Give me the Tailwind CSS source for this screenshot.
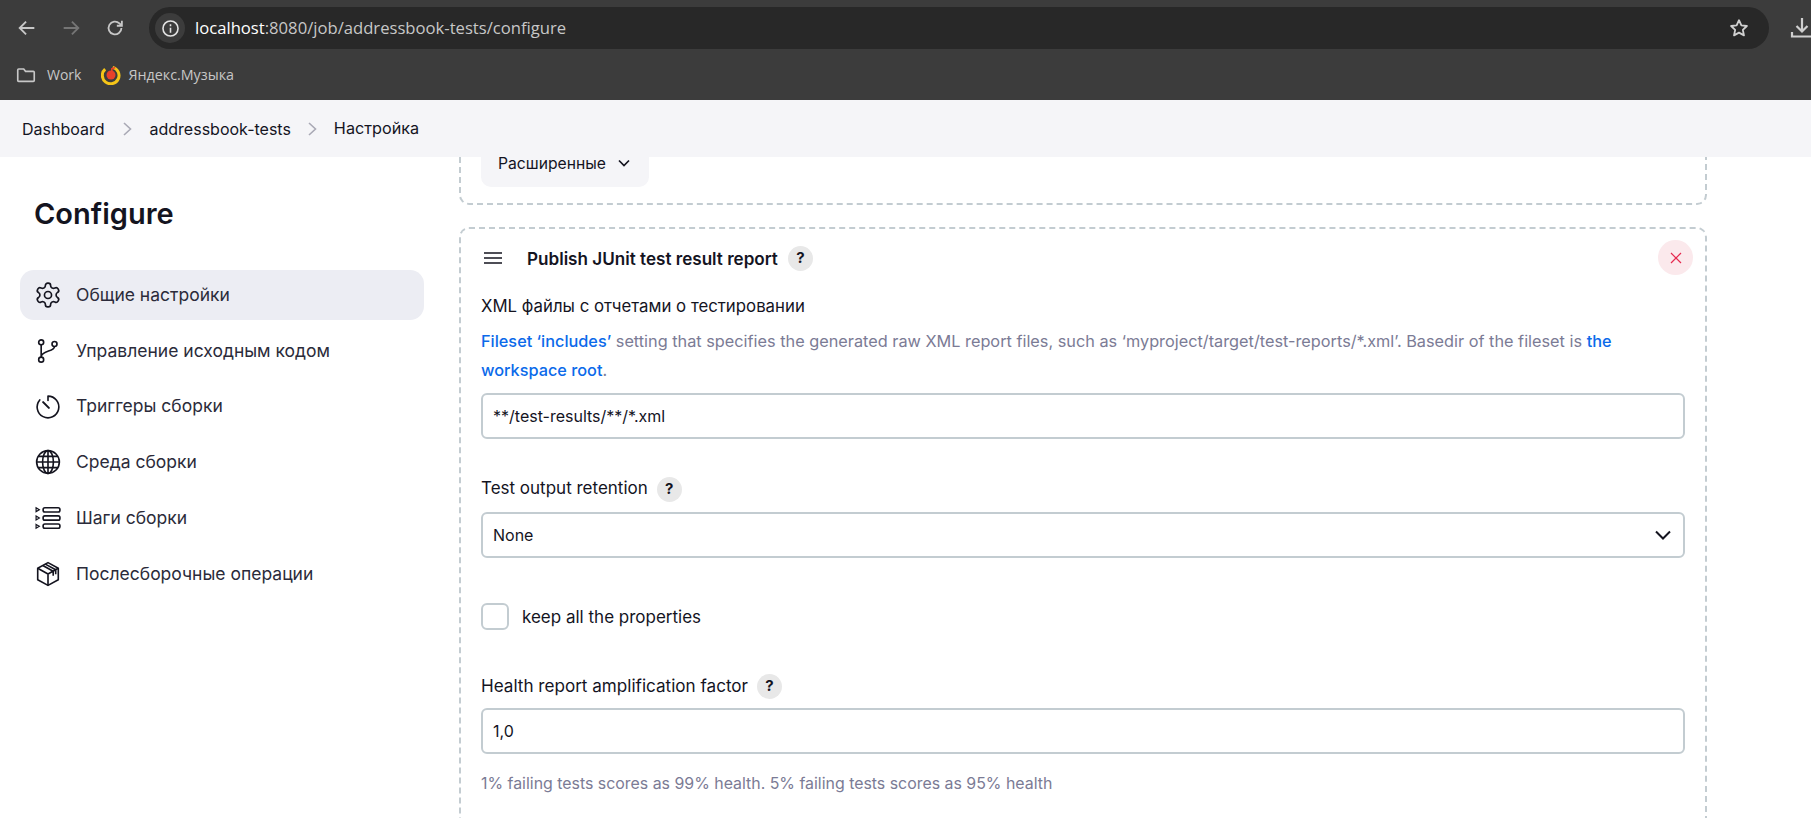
<!DOCTYPE html>
<html lang="ru">
<head>
  <meta charset="UTF-8">
  <title>addressbook-tests Config</title>
  <script src="https://cdn.jsdelivr.net/npm/@tailwindcss/browser@4"></script>
</head>
<body class="h-screen overflow-hidden bg-white text-[#14141f] font-['Inter',sans-serif] text-[16px] flex flex-col">
  <!-- Browser chrome -->
  <header class="relative z-20 h-[100px] shrink-0 bg-[#3c3c3c] font-['Open_Sans',sans-serif] flex flex-col overflow-hidden">
    <div class="h-[56px] flex items-center">
      <div class="w-[149px] shrink-0 flex items-center pl-[16px] gap-[22px]">
        <svg class="w-[22px] h-[22px]" viewBox="0 0 24 24" fill="none" stroke="#c7c7c7" stroke-width="2"><path d="M20 12H5M11 5l-7 7 7 7"/></svg>
        <svg class="w-[22px] h-[22px]" viewBox="0 0 24 24" fill="none" stroke="#757575" stroke-width="2"><path d="M4 12h15M13 5l7 7-7 7"/></svg>
        <svg class="w-[22px] h-[22px]" viewBox="0 0 24 24" fill="none" stroke="#c7c7c7" stroke-width="2"><path d="M19 12a7 7 0 1 1-2.2-5.1L19 9"/><path d="M19.5 4v5.5H14"/></svg>
      </div>
      <div class="w-[1620px] h-[42px] shrink-0 rounded-full bg-[#282828] flex items-center pl-[6px] pr-[19px]">
        <div class="w-[30px] h-[30px] rounded-full bg-[#3c3c3c] flex items-center justify-center">
          <svg class="w-[19px] h-[19px]" viewBox="0 0 24 24" fill="none" stroke="#e3e3e3" stroke-width="2"><circle cx="12" cy="12" r="9.5"/><path d="M12 11v6.5M12 6.5v2.5"/></svg>
        </div>
        <span class="ml-[10px] text-[16.65px] text-[#c7c7c7]"><span class="text-white">localhost</span>:8080/job/addressbook-tests/configure</span>
        <svg class="ml-auto w-[22px] h-[22px]" viewBox="0 0 24 24" fill="none" stroke="#d0d0d0" stroke-width="2" stroke-linejoin="round"><path d="M12 3.5l2.6 5.6 6 .7-4.4 4.2 1.2 6-5.4-3-5.4 3 1.2-6-4.4-4.2 6-.7z"/></svg>
      </div>
      <svg class="ml-[21px] w-[24px] h-[24px] shrink-0" viewBox="0 0 24 24" fill="none" stroke="#cfcfcf" stroke-width="2.2"><path d="M12 2v13M6.5 10l5.5 5.5 5.5-5.5M2 16v4.5h22V16"/></svg>
    </div>
    <div class="h-[37px] flex items-center text-[14.3px] text-[#c7c7c7]">
      <div class="ml-[15px] flex items-center gap-[10px]">
        <svg class="w-[22px] h-[22px]" viewBox="0 0 24 24" fill="none" stroke="#c7c7c7" stroke-width="1.8"><path d="M3 6.5a1 1 0 0 1 1-1h5.5l2 2.5H20a1 1 0 0 1 1 1v9a1 1 0 0 1-1 1H4a1 1 0 0 1-1-1z"/></svg>
        <span class="text-[14px]">Work</span>
      </div>
      <div class="ml-[20px] flex items-center gap-[7px]">
        <svg class="w-[20px] h-[20px]" viewBox="0 0 24 24" fill="none"><path d="M14 2.8A10 10 0 1 1 5 5" stroke="#f5c518" stroke-width="3.6"/><circle cx="12" cy="12" r="5.4" fill="#e8412a"/><path d="M13 12V4.5l4-1.5" stroke="#e8412a" stroke-width="2"/></svg>
        <span>Яндекс.Музыка</span>
      </div>
    </div>
  </header>

  <!-- Breadcrumbs -->
  <nav class="relative z-10 h-[57px] shrink-0 bg-[#f5f5f8] flex items-center pl-[22px] text-[16px] text-[#14141f]">
    <span>Dashboard</span>
    <svg class="mx-[17px] w-[11px] h-[16px]" viewBox="0 0 11 16" fill="none" stroke="#a9a9b5" stroke-width="1.6"><path d="M2 2l6.5 6L2 14"/></svg>
    <span>addressbook-tests</span>
    <svg class="mx-[16px] w-[11px] h-[16px]" viewBox="0 0 11 16" fill="none" stroke="#a9a9b5" stroke-width="1.6"><path d="M2 2l6.5 6L2 14"/></svg>
    <span class="text-[16.2px]">Настройка</span>
  </nav>

  <div class="flex flex-1 min-h-0">
    <!-- Sidebar -->
    <aside class="w-[459px] shrink-0 pl-[20px] pr-[35px]">
      <h1 class="mt-[37px] ml-[14px] h-[40px] leading-[40px] text-[29px] font-semibold">Configure</h1>
      <ul class="mt-[36px] flex flex-col gap-[5.8px] text-[17.5px] text-[#2b2b3a]">
        <li class="h-[50px] rounded-[14px] bg-[#ecedf3] flex items-center pl-[15px] gap-[15px]">
          <svg class="w-[26px] h-[26px]" viewBox="1 1 22 22" fill="none" stroke="#14141f" stroke-width="1.4"><path d="M12.22 2h-.44a2 2 0 0 0-2 2v.18a2 2 0 0 1-1 1.73l-.43.25a2 2 0 0 1-2 0l-.15-.08a2 2 0 0 0-2.73.73l-.22.38a2 2 0 0 0 .73 2.73l.15.1a2 2 0 0 1 1 1.72v.51a2 2 0 0 1-1 1.74l-.15.09a2 2 0 0 0-.73 2.73l.22.38a2 2 0 0 0 2.73.73l.15-.08a2 2 0 0 1 2 0l.43.25a2 2 0 0 1 1 1.73V20a2 2 0 0 0 2 2h.44a2 2 0 0 0 2-2v-.18a2 2 0 0 1 1-1.73l.43-.25a2 2 0 0 1 2 0l.15.08a2 2 0 0 0 2.73-.73l.22-.39a2 2 0 0 0-.73-2.73l-.15-.08a2 2 0 0 1-1-1.74v-.5a2 2 0 0 1 1-1.74l.15-.09a2 2 0 0 0 .73-2.73l-.22-.38a2 2 0 0 0-2.73-.73l-.15.08a2 2 0 0 1-2 0l-.43-.25a2 2 0 0 1-1-1.73V4a2 2 0 0 0-2-2z"/><circle cx="12" cy="12" r="3"/></svg>
          <span>Общие настройки</span>
        </li>
        <li class="h-[50px] flex items-center pl-[15px] gap-[15px]">
          <svg class="w-[26px] h-[26px]" viewBox="0 0 24 24" fill="none" stroke="#14141f" stroke-width="1.5"><circle cx="5.7" cy="4" r="2.3"/><circle cx="5.7" cy="20" r="2.3"/><circle cx="18" cy="5.5" r="2.3"/><path d="M5.7 6.3v11.4M18 7.8c0 5-12.3 3.5-12.3 9.9"/></svg>
          <span>Управление исходным кодом</span>
        </li>
        <li class="h-[50px] flex items-center pl-[15px] gap-[15px]">
          <svg class="w-[26px] h-[26px]" viewBox="0 0 24 24" fill="none" stroke="#14141f" stroke-width="1.5" stroke-linecap="round"><path d="M12 2a10 10 0 1 1-7.6 3.5M12 2v4"/><path d="M7.5 7.5l5.3 5.3" stroke-width="1.9"/></svg>
          <span>Триггеры сборки</span>
        </li>
        <li class="h-[50px] flex items-center pl-[15px] gap-[15px]">
          <svg class="w-[26px] h-[26px]" viewBox="0 0 24 24" fill="none" stroke="#14141f" stroke-width="1.5"><circle cx="12" cy="12" r="10.5"/><ellipse cx="12" cy="12" rx="5" ry="10.5"/><path d="M12 1.5v21M1.5 12h21M3 6.8h18M3 17.2h18"/></svg>
          <span>Среда сборки</span>
        </li>
        <li class="h-[50px] flex items-center pl-[15px] gap-[15px]">
          <svg class="w-[26px] h-[26px]" viewBox="0 0 24 24" fill="none" stroke="#14141f" stroke-width="1.5"><path d="M1 2.5l3 1.8-3 1.8zM1 10.2l3 1.8-3 1.8zM1 17.9l3 1.8-3 1.8z" stroke-width="1.1"/><rect x="7.5" y="2.5" width="15.5" height="4" rx="1.6"/><rect x="7.5" y="10" width="15.5" height="4" rx="1.6"/><rect x="7.5" y="17.5" width="15.5" height="4" rx="1.6"/></svg>
          <span>Шаги сборки</span>
        </li>
        <li class="h-[50px] flex items-center pl-[15px] gap-[15px]">
          <svg class="w-[26px] h-[26px]" viewBox="0 0 24 24" fill="none" stroke="#14141f" stroke-width="1.5" stroke-linejoin="round"><path d="M12 1.5l9.5 5.2v10.6L12 22.5l-9.5-5.2V6.7z"/><path d="M2.5 6.7L12 12l9.5-5.3M12 12v10.5M7.2 4.1l9.6 5.3v4.2M9.5 2.9l9.6 5.2v4.2"/></svg>
          <span>Послесборочные операции</span>
        </li>
      </ul>
    </aside>

    <!-- Main form -->
    <main class="w-[1248px] shrink-0 -mt-[60px]">
      <section class="h-[108px] border-2 border-dashed border-[#c3ccd1] rounded-[10px] pl-[20px] pt-[42px]">
        <button class="w-[168px] h-[46px] rounded-[10px] bg-[#f5f5f8] flex items-center pl-[17px] text-[15.7px] text-[#14141f]">
          Расширенные
          <svg class="ml-[11px] w-[14px] h-[14px] -mt-[3px]" viewBox="0 0 14 14" fill="none" stroke="#14141f" stroke-width="1.7"><path d="M2 4.5l5 5 5-5"/></svg>
        </button>
      </section>

      <section class="relative mt-[22px] h-[700px] border-2 border-dashed border-[#c3ccd1] rounded-[10px] pl-[20px] pr-[20px]">
        <div class="h-[58px] flex items-center">
          <svg class="ml-[2px] w-[20px] h-[14px]" viewBox="0 0 20 14" fill="none" stroke="#14141f" stroke-width="1.6"><path d="M1 2h18M1 7h18M1 12h18"/></svg>
          <span class="ml-[24px] text-[17.1px] font-semibold pt-[1px]">Publish JUnit test result report</span>
          <span class="ml-[10px] w-[25px] h-[25px] rounded-full bg-[#e8e8e8] flex items-center justify-center text-[15px] font-bold">?</span>
        </div>
        <button class="absolute top-[11px] right-[12px] w-[35px] h-[35px] rounded-full bg-[#fbe9ec] flex items-center justify-center">
          <svg class="w-[12px] h-[12px]" viewBox="0 0 12 12" fill="none" stroke="#e6294f" stroke-width="1.2"><path d="M1 1l10 10M11 1L1 11"/></svg>
        </button>

        <div class="mt-[7px] h-[24px] leading-[24px] text-[16.8px]">XML файлы с отчетами о тестировании</div>
        <p class="mt-[9px] leading-[29px] text-[16.3px] text-[#7b7b95]"><a class="text-[#0b6aea] font-medium">Fileset ‘includes’</a> setting that specifies the generated raw XML report files, such as ‘myproject/target/test-reports/*.xml’. Basedir of the fileset is <a class="text-[#0b6aea] font-medium">the</a><br><a class="text-[#0b6aea] font-medium">workspace root</a>.</p>
        <div class="mt-[8px] h-[46px] border-2 border-[#c3ccd1] rounded-[6px] flex items-center px-[10px]">**/test-results/**/*.xml</div>

        <div class="mt-[38px] h-[24px] flex items-center text-[17px]">
          <span>Test output retention</span>
          <span class="ml-[9px] w-[25px] h-[25px] rounded-full bg-[#e8e8e8] flex items-center justify-center text-[15px] font-bold">?</span>
        </div>
        <div class="mt-[11px] h-[46px] border-2 border-[#c3ccd1] rounded-[6px] flex items-center justify-between px-[10px]">
          <span>None</span>
          <svg class="w-[18px] h-[18px] mr-[1px]" viewBox="0 0 18 18" fill="none" stroke="#14141f" stroke-width="2"><path d="M2 5.5l7 7 7-7"/></svg>
        </div>

        <div class="mt-[45px] h-[27px] flex items-center text-[17px]">
          <span class="w-[28px] h-[27px] border-2 border-[#c3ccd1] rounded-[6px]"></span>
          <span class="ml-[13px] pt-[3px]">keep all the properties</span>
        </div>

        <div class="mt-[44px] h-[24px] flex items-center text-[17.1px]">
          <span>Health report amplification factor</span>
          <span class="ml-[9px] w-[25px] h-[25px] rounded-full bg-[#e8e8e8] flex items-center justify-center text-[15px] font-bold">?</span>
        </div>
        <div class="mt-[10px] h-[46px] border-2 border-[#c3ccd1] rounded-[6px] flex items-center px-[10px]">1,0</div>
        <p class="mt-[18px] leading-[24px] text-[15.9px] text-[#7b7b95]">1% failing tests scores as 99% health. 5% failing tests scores as 95% health</p>
      </section>
    </main>
  </div>
</body>
</html>
